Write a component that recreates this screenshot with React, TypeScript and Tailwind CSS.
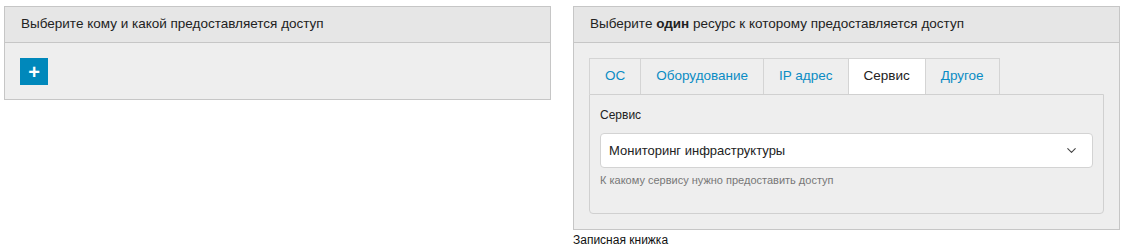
import React from 'react';
import { ChevronDown } from 'lucide-react';

const tabs = ['ОС', 'Оборудование', 'IP адрес', 'Сервис', 'Другое'];

const PanelHeader: React.FC<{ children: React.ReactNode }> = ({ children }) => (
  <div className="h-[36px] flex items-center px-4 bg-[#e6e6e6] border-b border-[#c6c6c6] text-[13.5px] text-[#222]">
    {children}
  </div>
);

const App: React.FC = () => {
  const active = 'Сервис';
  return (
    <div className="bg-white w-[1124px] h-[251px] pt-[6px] px-[4px] flex gap-[22px] font-['Liberation_Sans',Arial,sans-serif]">
      {/* Who gets access */}
      <div className="w-[547px] self-start border border-[#c6c6c6] bg-[#eeeeee]">
        <PanelHeader>Выберите кому и какой предоставляется доступ</PanelHeader>
        <div className="p-[15px] pb-[14px]">
          <button className="w-[28px] h-[27px] bg-[#0088bb] flex items-center justify-center text-white text-[20px] font-bold leading-none">
            +
          </button>
        </div>
      </div>

      {/* Resource */}
      <div className="w-[547px] flex flex-col">
        <div className="border border-[#c6c6c6] bg-[#eeeeee]">
          <PanelHeader>
            <span>
              Выберите <b>один</b> ресурс к которому предоставляется доступ
            </span>
          </PanelHeader>
          <div className="p-[15px]">
            <div className="flex">
              {tabs.map((t) => (
                <div
                  key={t}
                  className={
                    t === active
                      ? 'h-[36px] px-[15px] flex items-center bg-white border-t border-r border-[#d4d4d4] text-[13.5px] text-[#222]'
                      : 'h-[36px] px-[15px] flex items-center border-t border-r border-[#d4d4d4] first:border-l text-[13.5px] text-[#0a8cc4]'
                  }
                >
                  {t}
                </div>
              ))}
            </div>
            <div className="border border-[#d0d0d0] rounded-b-[4px] px-[10px] pt-[10px] pb-[24px]">
              <div className="text-[12px] leading-[20px] text-[#222]">Сервис</div>
              <div className="mt-[8px] h-[35px] bg-white border border-[#d3d3d3] rounded-[4px] flex items-center justify-between pl-[8px] pr-[13px]">
                <span className="text-[13px] text-[#222]">Мониторинг инфраструктуры</span>
                <ChevronDown size={15} strokeWidth={1.75} className="text-[#444]" />
              </div>
              <div className="mt-[3px] text-[11px] leading-[18px] text-[#777]">
                К какому сервису нужно предоставить доступ
              </div>
            </div>
          </div>
        </div>
        <div className="text-[12px] leading-[16px] text-[#111] mt-[2px]">Записная книжка</div>
      </div>
    </div>
  );
};

export default App;
